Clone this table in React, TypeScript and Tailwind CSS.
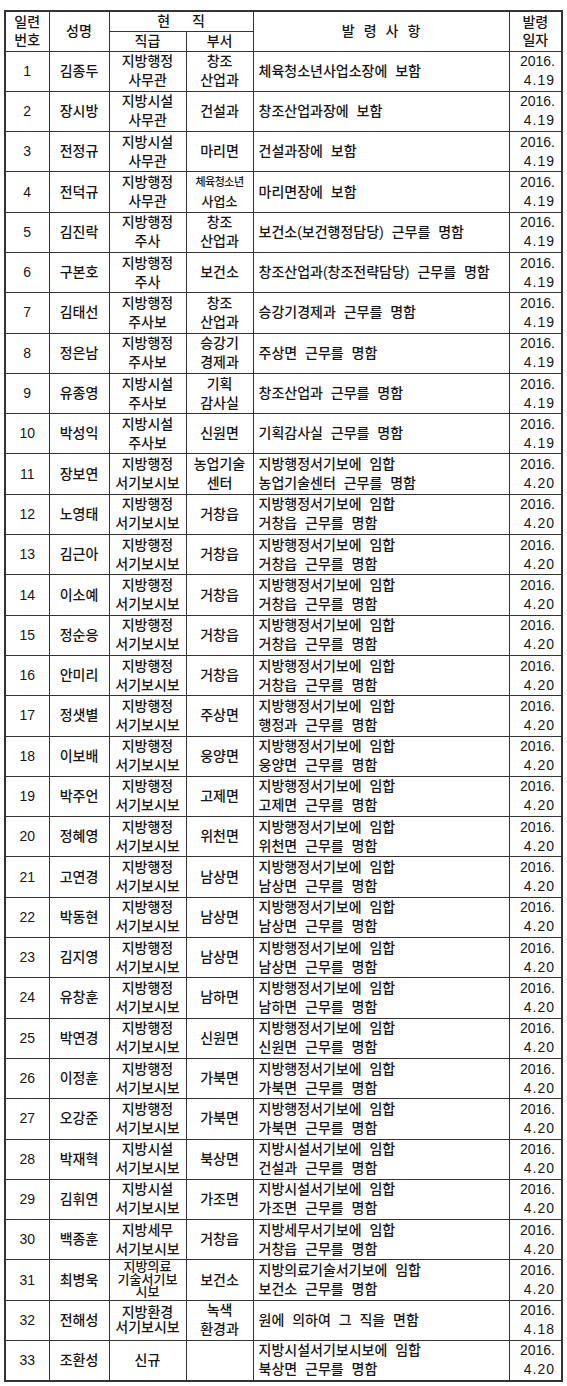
import React from 'react';

interface Row {
    no: number;
    name: string;
    grade: string[];
    dept: string[];
    order: string[];
    date: string;
}

const row = (no: number, name: string, grade: string, dept: string, order: string, date = '4.20'): Row => ({
    no,
    name,
    grade: grade.split('/'),
    dept: dept ? dept.split('/') : [],
    order: order.split('/'),
    date,
});

const rows: Row[] = [
    row(1, '김종두', '지방행정/사무관', '창조/산업과', '체육청소년사업소장에 보함', '4.19'),
    row(2, '장시방', '지방시설/사무관', '건설과', '창조산업과장에 보함', '4.19'),
    row(3, '전정규', '지방시설/사무관', '마리면', '건설과장에 보함', '4.19'),
    row(4, '전덕규', '지방행정/사무관', '체육청소년/사업소', '마리면장에 보함', '4.19'),
    row(5, '김진락', '지방행정/주사', '창조/산업과', '보건소(보건행정담당) 근무를 명함', '4.19'),
    row(6, '구본호', '지방행정/주사', '보건소', '창조산업과(창조전략담당) 근무를 명함', '4.19'),
    row(7, '김태선', '지방행정/주사보', '창조/산업과', '승강기경제과 근무를 명함', '4.19'),
    row(8, '정은남', '지방행정/주사보', '승강기/경제과', '주상면 근무를 명함', '4.19'),
    row(9, '유종영', '지방시설/주사보', '기획/감사실', '창조산업과 근무를 명함', '4.19'),
    row(10, '박성익', '지방시설/주사보', '신원면', '기획감사실 근무를 명함', '4.19'),
    row(11, '장보연', '지방행정/서기보시보', '농업기술/센터', '지방행정서기보에 임합/농업기술센터 근무를 명함'),
    row(12, '노영태', '지방행정/서기보시보', '거창읍', '지방행정서기보에 임합/거창읍 근무를 명함'),
    row(13, '김근아', '지방행정/서기보시보', '거창읍', '지방행정서기보에 임합/거창읍 근무를 명함'),
    row(14, '이소예', '지방행정/서기보시보', '거창읍', '지방행정서기보에 임합/거창읍 근무를 명함'),
    row(15, '정순응', '지방행정/서기보시보', '거창읍', '지방행정서기보에 임합/거창읍 근무를 명함'),
    row(16, '안미리', '지방행정/서기보시보', '거창읍', '지방행정서기보에 임합/거창읍 근무를 명함'),
    row(17, '정샛별', '지방행정/서기보시보', '주상면', '지방행정서기보에 임합/행정과 근무를 명함'),
    row(18, '이보배', '지방행정/서기보시보', '웅양면', '지방행정서기보에 임합/웅양면 근무를 명함'),
    row(19, '박주언', '지방행정/서기보시보', '고제면', '지방행정서기보에 임합/고제면 근무를 명함'),
    row(20, '정혜영', '지방행정/서기보시보', '위천면', '지방행정서기보에 임합/위천면 근무를 명함'),
    row(21, '고연경', '지방행정/서기보시보', '남상면', '지방행정서기보에 임합/남상면 근무를 명함'),
    row(22, '박동현', '지방행정/서기보시보', '남상면', '지방행정서기보에 임합/남상면 근무를 명함'),
    row(23, '김지영', '지방행정/서기보시보', '남상면', '지방행정서기보에 임합/남상면 근무를 명함'),
    row(24, '유창훈', '지방행정/서기보시보', '남하면', '지방행정서기보에 임합/남하면 근무를 명함'),
    row(25, '박연경', '지방행정/서기보시보', '신원면', '지방행정서기보에 임합/신원면 근무를 명함'),
    row(26, '이정훈', '지방행정/서기보시보', '가북면', '지방행정서기보에 임합/가북면 근무를 명함'),
    row(27, '오강준', '지방행정/서기보시보', '가북면', '지방행정서기보에 임합/가북면 근무를 명함'),
    row(28, '박재혁', '지방시설/서기보시보', '북상면', '지방시설서기보에 임합/건설과 근무를 명함'),
    row(29, '김휘연', '지방시설/서기보시보', '가조면', '지방시설서기보에 임합/가조면 근무를 명함'),
    row(30, '백종훈', '지방세무/서기보시보', '거창읍', '지방세무서기보에 임합/거창읍 근무를 명함'),
    row(31, '최병욱', '지방의료/기술서기보/시보', '보건소', '지방의료기술서기보에 임합/보건소 근무를 명함'),
    row(32, '전해성', '지방환경/서기보시보', '녹색/환경과', '원에 의하여 그 직을 면함', '4.18'),
    row(33, '조환성', '신규', '', '지방시설서기보시보에 임합/북상면 근무를 명함'),
];

const cell = 'border border-[#333] p-0 align-middle';

const Lines = ({ lines, leading = 'leading-[19px]' }: { lines: string[]; leading?: string }) => (
    <div className={`flex flex-col items-center ${leading}`}>
        {lines.map((l, i) => (
            <span key={i}>{l}</span>
        ))}
    </div>
);

const GradeCell = ({ r }: { r: Row }) => {
    if (r.grade.length === 3) {
        return (
            <div className="text-[13px]">
                <Lines lines={r.grade} leading="leading-[12.5px]" />
            </div>
        );
    }
    if (r.no === 32) return <Lines lines={r.grade} leading="leading-[15px]" />;
    return <Lines lines={r.grade} />;
};

const DeptCell = ({ r }: { r: Row }) => {
    if (r.no === 4) {
        return (
            <div className="flex flex-col items-center leading-[19px]">
                <span className="text-[11px] tracking-[-0.5px]">{r.dept[0]}</span>
                <span className="text-[13px]">{r.dept[1]}</span>
            </div>
        );
    }
    return <Lines lines={r.dept} />;
};

export default function App() {
    return (
        <div
            className="min-h-[1386px] w-[567px] bg-white pl-[4px] pt-[10px] font-medium text-[#161616]"
            style={{ fontFamily: '"Liberation Sans", "Noto Sans CJK KR", sans-serif' }}
        >
            <table className="w-[557px] table-fixed border-collapse border-2 border-[#333] text-[14px] [word-spacing:4px]">
                <colgroup>
                    <col className="w-[44px]" />
                    <col className="w-[60px]" />
                    <col className="w-[77px]" />
                    <col className="w-[67px]" />
                    <col className="w-[256px]" />
                    <col className="w-[53px]" />
                </colgroup>
                <thead>
                    <tr className="h-[20px]">
                        <th rowSpan={2} className={`${cell} font-medium`}>
                            <Lines lines={['일련', '번호']} leading="leading-[18.5px]" />
                        </th>
                        <th rowSpan={2} className={`${cell} font-medium leading-[18px]`}>성명</th>
                        <th colSpan={2} className={`${cell} font-medium leading-[18px] tracking-[22px] pl-[22px]`}>현직</th>
                        <th rowSpan={2} className={`${cell} font-medium leading-[18px] tracking-[9px] pl-[9px]`}>발령사항</th>
                        <th rowSpan={2} className={`${cell} font-medium`}>
                            <Lines lines={['발령', '일자']} leading="leading-[18.5px]" />
                        </th>
                    </tr>
                    <tr className="h-[20px]">
                        <th className={`${cell} font-medium leading-[18px]`}>직급</th>
                        <th className={`${cell} font-medium leading-[18px]`}>부서</th>
                    </tr>
                </thead>
                <tbody>
                    {rows.map((r) => (
                        <tr key={r.no} className="h-[40.3px]">
                            <td className={`${cell} text-center leading-[19px]`}>{r.no}</td>
                            <td className={`${cell} text-center leading-[19px]`}>{r.name}</td>
                            <td className={cell}>
                                <GradeCell r={r} />
                            </td>
                            <td className={cell}>
                                <DeptCell r={r} />
                            </td>
                            <td className={`${cell} pl-[5px]`}>
                                <div className="flex flex-col leading-[19px]">
                                    {r.order.map((o, i) => (
                                        <span key={i}>{o}</span>
                                    ))}
                                </div>
                            </td>
                            <td className={`${cell} pr-[6px]`}>
                                <div className="flex flex-col items-end leading-[19px] [word-spacing:0]">
                                    <span>2016.</span>
                                    <span className="tracking-[1px]">{r.date}</span>
                                </div>
                            </td>
                        </tr>
                    ))}
                </tbody>
            </table>
        </div>
    );
}
